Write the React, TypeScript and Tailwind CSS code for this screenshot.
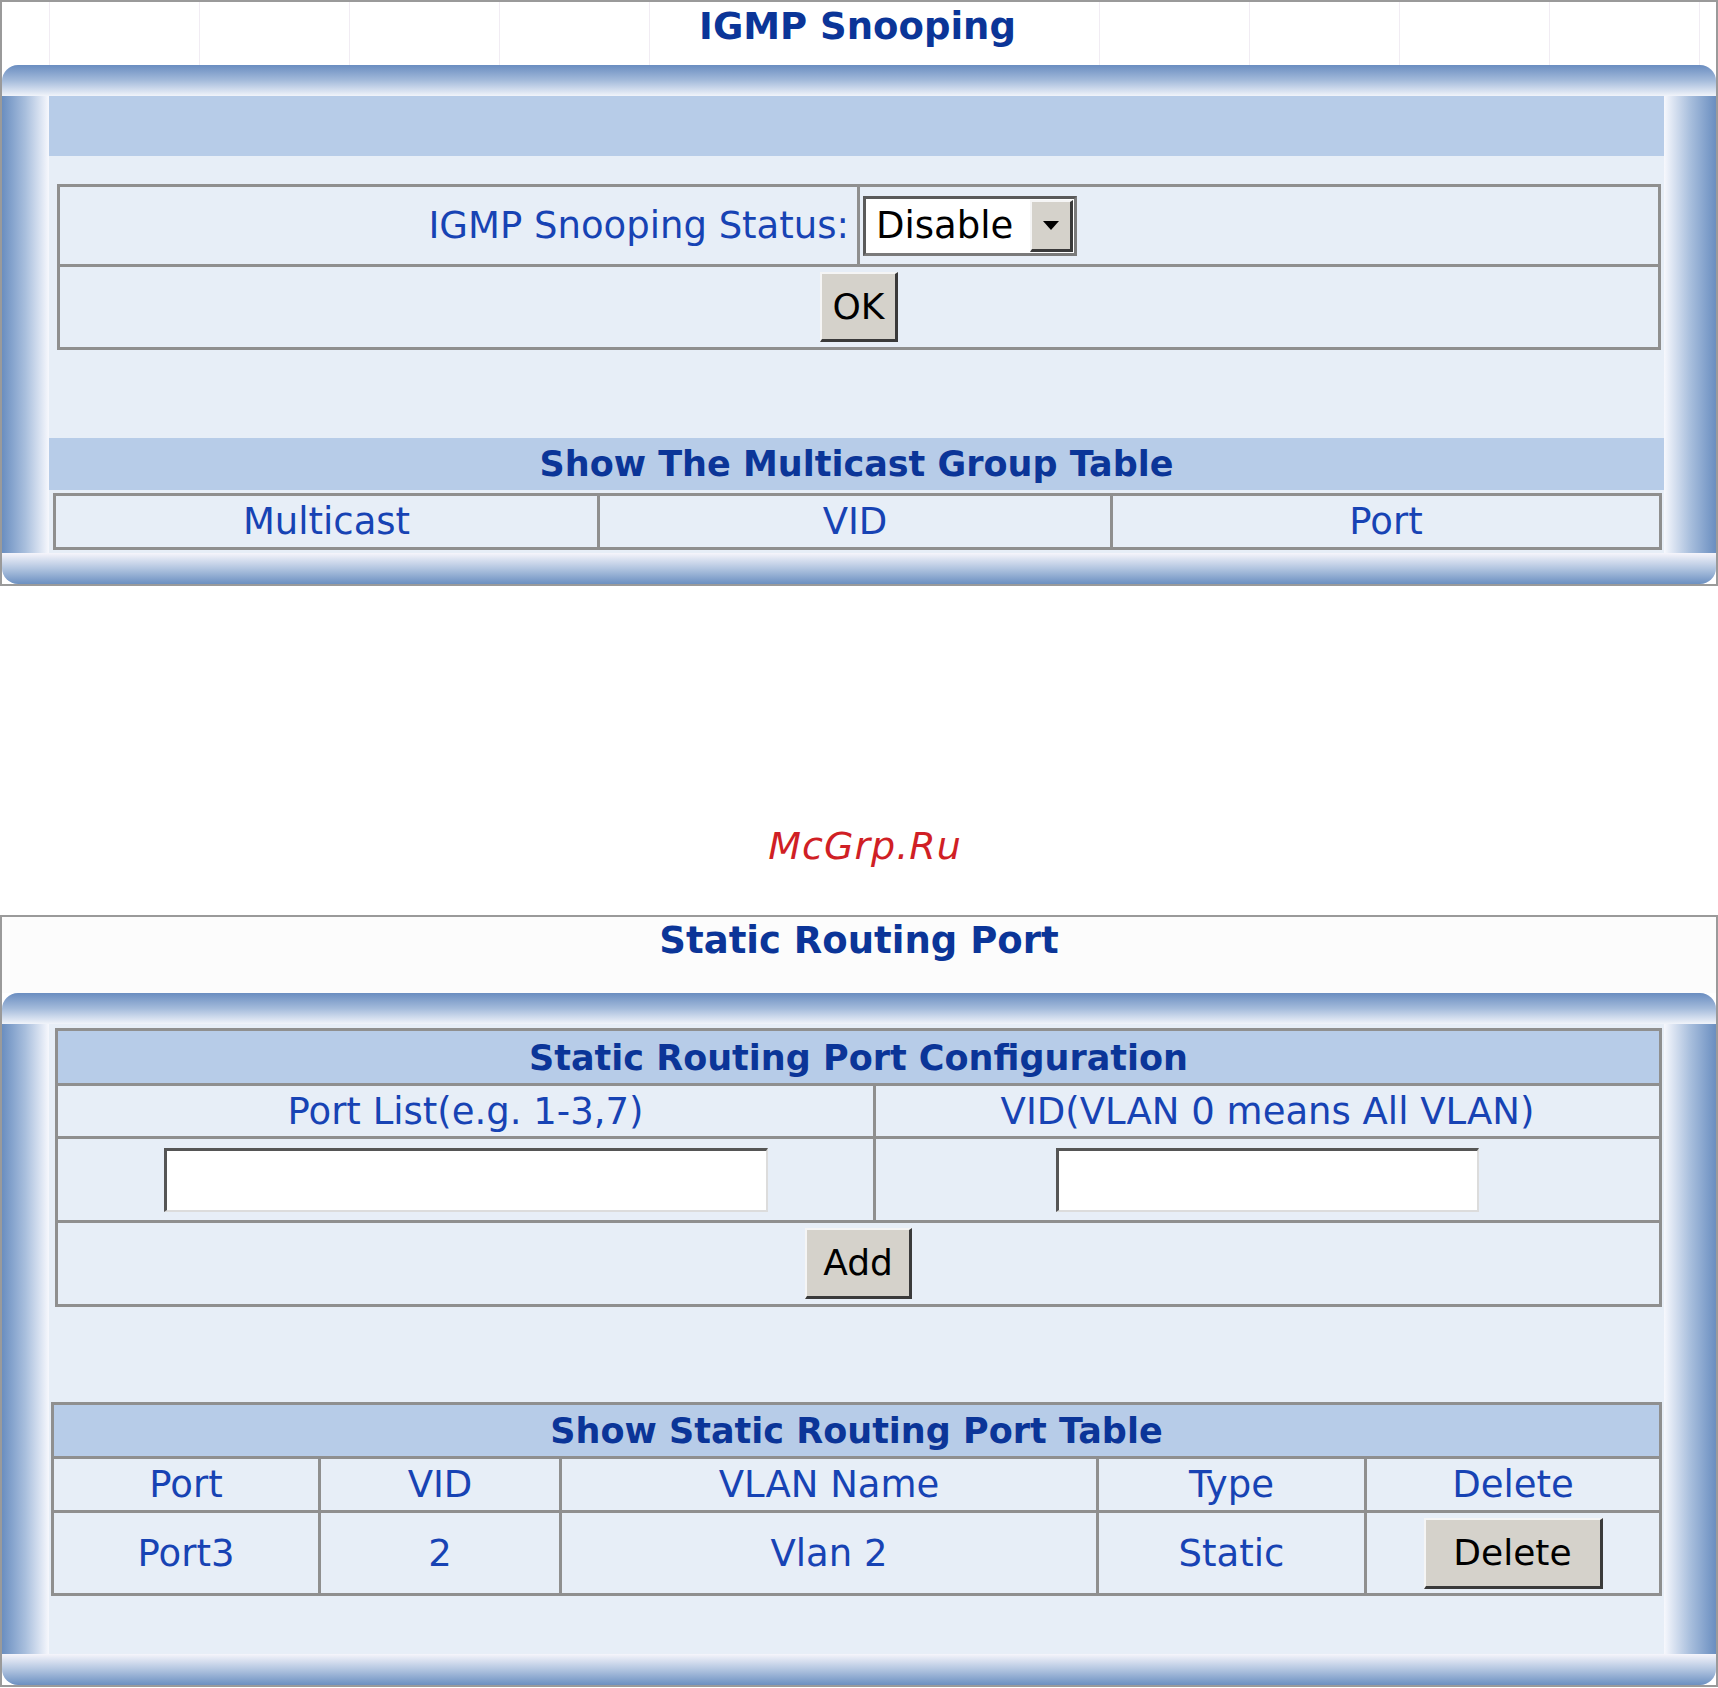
import React from "react";

// grid line colour used by every bordered table
const cell = "border-l-[3px] border-t-[3px] border-[#8f8f8f] align-middle";

function Frame({ top, children }: { top: React.ReactNode; children: React.ReactNode }) {
  return (
    <div className="border-2 border-[#9a9a9a]">
      {top}
      <div className="h-[31px] rounded-t-[16px] bg-linear-to-b from-[#6a8dc0] via-[#a4bbdb] to-[#f1f4fa]" />
      <div className="flex">
        <div className="w-[47px] shrink-0 bg-linear-to-r from-[#6a8ec0] via-[#a9bfdd] to-[#f7f8fd]" />
        <div className="flex-1 bg-[#e7eef7]">{children}</div>
        <div className="w-[52px] shrink-0 bg-linear-to-l from-[#6a8ec0] via-[#a9bfdd] to-[#f7f8fd]" />
      </div>
      <div className="h-[31px] rounded-b-[16px] bg-linear-to-b from-[#f6f5fb] via-[#b2c5e0] to-[#6c90c1]" />
    </div>
  );
}

function Btn({ label, w, h }: { label: string; w: string; h: string }) {
  return (
    <button
      className={`${w} ${h} inline-flex items-center justify-center bg-[#d5d2cb] border-t-2 border-l-2 border-[#f5f5f5] border-b-[3px] border-r-[3px] border-b-[#3a3a3a] border-r-[#3a3a3a] text-[36px] text-black leading-none`}
    >
      {label}
    </button>
  );
}

function TextBox({ w }: { w: string }) {
  return (
    <div
      className={`${w} h-[64px] bg-white border-t-[3px] border-l-[3px] border-[#555] border-b-2 border-r-2 border-b-[#dcdcdc] border-r-[#dcdcdc]`}
    />
  );
}

export default function App() {
  return (
    <div className="w-[1718px] bg-white font-['DejaVu_Sans',sans-serif] leading-none">
      {/* IGMP Snooping */}
      <Frame
        top={
          <div className="flex h-[63px] bg-white">
            <div className="w-[47px] shrink-0" />
            <div className="w-[150px] border-l border-[#f1ecf3]" />
            <div className="w-[150px] border-l border-[#f1ecf3]" />
            <div className="w-[150px] border-l border-[#f1ecf3]" />
            <div className="w-[150px] border-l border-[#f1ecf3]" />
            <div className="w-[450px] border-l border-[#f1ecf3] flex justify-center pt-[6px] pr-[34px]">
              <span className="text-[37px] font-bold text-[#0b3598] whitespace-nowrap">IGMP Snooping</span>
            </div>
            <div className="w-[150px] border-l border-[#f1ecf3]" />
            <div className="w-[150px] border-l border-[#f1ecf3]" />
            <div className="w-[150px] border-l border-[#f1ecf3]" />
            <div className="w-[150px] border-l border-[#f1ecf3]" />
            <div className="flex-1 border-l border-[#f1ecf3]" />
          </div>
        }
      >
        <div className="h-[60px] bg-[#b7cce8]" />
        <div className="h-[28px]" />
        <table className="ml-[8px] w-[1604px] table-fixed border-separate border-spacing-0 border-r-[3px] border-b-[3px] border-[#8f8f8f]">
          <colgroup>
            <col className="w-[800px]" />
            <col />
          </colgroup>
          <tbody>
            <tr className="h-[80px]">
              <td className={`${cell} text-right pr-[8px] text-[37px] text-[#1743b4]`}>IGMP Snooping Status:</td>
              <td className={`${cell} pl-[3px]`}>
                <div className="flex w-[214px] h-[60px] border-[3px] border-[#5a5a5a] border-b-[#7a7a7a] border-r-[#7a7a7a] bg-white">
                  <div className="flex-1 flex items-center pl-[10px] text-[37px] text-black">Disable</div>
                  <div className="w-[43px] m-[1px] flex items-center justify-center bg-[#d5d2cb] border-t-2 border-l-2 border-[#f5f5f5] border-b-[3px] border-r-[3px] border-b-[#3a3a3a] border-r-[#3a3a3a]">
                    <svg width="18" height="11" viewBox="0 0 18 11">
                      <path d="M1 1h16L9 10z" fill="#000" />
                    </svg>
                  </div>
                </div>
              </td>
            </tr>
            <tr className="h-[83px]">
              <td colSpan={2} className={`${cell} text-center`}>
                <Btn label="OK" w="w-[78px]" h="h-[70px]" />
              </td>
            </tr>
          </tbody>
        </table>
        <div className="h-[88px]" />
        <div className="h-[52px] bg-[#b7cce8] flex items-center justify-center">
          <span className="text-[35px] font-bold text-[#0b3598]">Show The Multicast Group Table</span>
        </div>
        <table className="mt-[3px] ml-[4px] w-[1609px] table-fixed border-separate border-spacing-0 border-r-[3px] border-b-[3px] border-[#8f8f8f] text-[37px] text-[#1743b4]">
          <colgroup>
            <col className="w-[544px]" />
            <col className="w-[513px]" />
            <col />
          </colgroup>
          <tbody>
            <tr className="h-[54px]">
              <td className={`${cell} text-center`}>Multicast</td>
              <td className={`${cell} text-center`}>VID</td>
              <td className={`${cell} text-center`}>Port</td>
            </tr>
          </tbody>
        </table>
        <div className="h-[3px]" />
      </Frame>

      {/* watermark */}
      <div className="h-[329px] flex justify-center pt-[241px] pl-[12px]">
        <span className="text-[38px] italic tracking-[1px] text-[#d01f25]">McGrp.Ru</span>
      </div>

      {/* Static Routing Port */}
      <Frame
        top={
          <div className="h-[76px] bg-[#fcfcfc] flex justify-center pt-[5px]">
            <span className="text-[37px] font-bold text-[#0b3598]">Static Routing Port</span>
          </div>
        }
      >
        <div className="h-[4px]" />
        <table className="ml-[6px] w-[1607px] table-fixed border-separate border-spacing-0 border-r-[3px] border-b-[3px] border-[#8f8f8f] text-[37px] text-[#1743b4]">
          <colgroup>
            <col className="w-[818px]" />
            <col />
          </colgroup>
          <tbody>
            <tr className="h-[55px]">
              <td colSpan={2} className={`${cell} bg-[#b7cce8] text-center`}>
                <span className="text-[35px] font-bold text-[#0b3598]">Static Routing Port Configuration</span>
              </td>
            </tr>
            <tr className="h-[53px]">
              <td className={`${cell} text-center`}>Port List(e.g. 1-3,7)</td>
              <td className={`${cell} text-center`}>VID(VLAN 0 means All VLAN)</td>
            </tr>
            <tr className="h-[84px]">
              <td className={cell}>
                <div className="flex justify-center">
                  <TextBox w="w-[604px]" />
                </div>
              </td>
              <td className={cell}>
                <div className="flex justify-center">
                  <TextBox w="w-[423px]" />
                </div>
              </td>
            </tr>
            <tr className="h-[84px]">
              <td colSpan={2} className={`${cell} text-center`}>
                <Btn label="Add" w="w-[107px]" h="h-[71px]" />
              </td>
            </tr>
          </tbody>
        </table>
        <div className="h-[95px]" />
        <table className="ml-[2px] w-[1611px] table-fixed border-separate border-spacing-0 border-r-[3px] border-b-[3px] border-[#8f8f8f] text-[37px] text-[#1743b4]">
          <colgroup>
            <col className="w-[267px]" />
            <col className="w-[241px]" />
            <col className="w-[537px]" />
            <col className="w-[268px]" />
            <col />
          </colgroup>
          <tbody>
            <tr className="h-[54px]">
              <td colSpan={5} className={`${cell} bg-[#b7cce8] text-center`}>
                <span className="text-[35px] font-bold text-[#0b3598]">Show Static Routing Port Table</span>
              </td>
            </tr>
            <tr className="h-[54px]">
              <td className={`${cell} text-center`}>Port</td>
              <td className={`${cell} text-center`}>VID</td>
              <td className={`${cell} text-center`}>VLAN Name</td>
              <td className={`${cell} text-center`}>Type</td>
              <td className={`${cell} text-center`}>Delete</td>
            </tr>
            <tr className="h-[83px]">
              <td className={`${cell} text-center`}>Port3</td>
              <td className={`${cell} text-center`}>2</td>
              <td className={`${cell} text-center`}>Vlan 2</td>
              <td className={`${cell} text-center`}>Static</td>
              <td className={`${cell} text-center`}>
                <Btn label="Delete" w="w-[179px]" h="h-[71px]" />
              </td>
            </tr>
          </tbody>
        </table>
        <div className="h-[58px]" />
      </Frame>
    </div>
  );
}
